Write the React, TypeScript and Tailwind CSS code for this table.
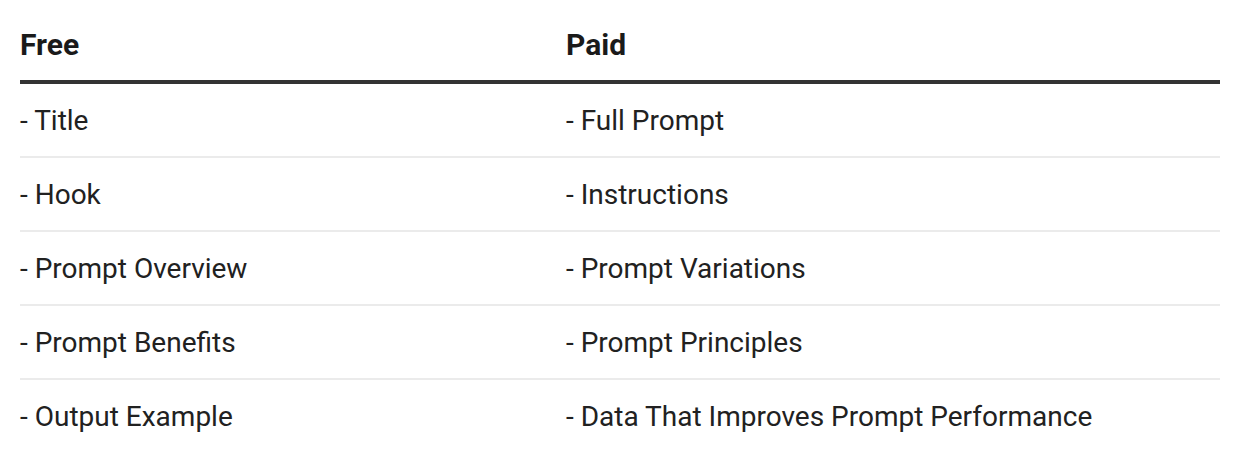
const rows: [string, string][] = [
  ["- Title", "- Full Prompt"],
  ["- Hook", "- Instructions"],
  ["- Prompt Overview", "- Prompt Variations"],
  ["- Prompt Benefits", "- Prompt Principles"],
  ["- Output Example", "- Data That Improves Prompt Performance"],
];

export default function App() {
  return (
    <div className="min-h-screen bg-white px-5 font-['Roboto',sans-serif] text-[28px] leading-[42px]">
      <div className="grid grid-cols-[546px_1fr] border-b-4 border-[#333333] pt-6 pb-[14px] text-[30px] font-bold text-[#1a1a1a]">
        <div>Free</div>
        <div>Paid</div>
      </div>
      {rows.map(([free, paid], i) => (
        <div
          key={free}
          className={
            "grid grid-cols-[546px_1fr] pt-[16px] pb-[14px] text-[#212121] " +
            (i < rows.length - 1 ? "border-b-2 border-[#ebebeb]" : "")
          }
        >
          <div>{free}</div>
          <div>{paid}</div>
        </div>
      ))}
    </div>
  );
}
